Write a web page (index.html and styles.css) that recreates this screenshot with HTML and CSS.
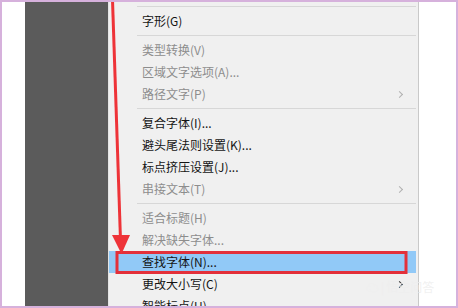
FILE: index.html
```html
<html>
<head>
    <meta charset="utf-8">
    <link rel="stylesheet" href="styles.css">
</head>
<body>
    <div class="frame">
        <div class="side-white"></div>
        <div class="side-dark"></div>
        <div class="menu">
            <div class="sep"></div>
            <div class="item">字形(G)</div>
            <div class="sep"></div>
            <div class="item off">类型转换(V)</div>
            <div class="item off">区域文字选项(A)...</div>
            <div class="item off sub">路径文字(P)</div>
            <div class="sep"></div>
            <div class="item">复合字体(I)...</div>
            <div class="item">避头尾法则设置(K)...</div>
            <div class="item">标点挤压设置(J)...</div>
            <div class="item off sub">串接文本(T)</div>
            <div class="sep"></div>
            <div class="item off">适合标题(H)</div>
            <div class="item off">解决缺失字体...</div>
            <div class="item active">查找字体(N)...</div>
            <div class="item sub">更改大小写(C)</div>
            <div class="item">智能标点(U)...</div>
        </div>
        <div class="side-right"></div>

        <svg class="marks" width="458" height="308" viewBox="0 0 458 308">
            <rect x="117" y="252.5" width="289" height="20" fill="none" stroke="#e3303a" stroke-width="3"/>
            <line x1="112.5" y1="0" x2="120.5" y2="240" stroke="#ee3338" stroke-width="3"/>
            <polygon points="112,235 130,235 121.5,254" fill="#ee3338"/>
        </svg>

        <div class="watermark">
            <span class="wm-icon">&#9729;</span><span class="wm-bar">|</span>悟空问答
        </div>
    </div>
</body>
</html>
```

FILE: styles.css
```css
body{
    margin: 0;
    font-family: "Noto Sans CJK SC", "Noto Sans", sans-serif;
}

.frame{
    position: relative;
    width: 458px;
    height: 308px;
    box-sizing: border-box;
    border: 2px solid #d6b1dc;
    display: flex;
    overflow: hidden;
    background: #fff;
}

.side-white{
    width: 23px;
    background: #fff;
}

.side-dark{
    width: 83px;
    background: #5b5b5b;
}

.menu{
    width: 309px;
    background: #f0f0f0;
    border-left: 1px solid #e4e4e4;
    border-right: 1px solid #c9c9c9;
    padding-top: 1px;
}

.side-right{
    flex: 1;
    background: #fff;
}

.sep{
    height: 7px;
    position: relative;
}

.sep::after{
    content: "";
    position: absolute;
    left: 28px;
    right: 2px;
    top: 3px;
    border-top: 1px solid #d7d7d7;
}

.item{
    position: relative;
    height: 22px;
    line-height: 22px;
    padding-left: 33px;
    margin-right: 2px;
    font-size: 12px;
    color: #141414;
    white-space: nowrap;
}

.item.off{
    color: #8d8d8d;
}

.item.active{
    background: #91c9f7;
}

.item.sub::after{
    content: "";
    position: absolute;
    right: 14px;
    top: 9px;
    width: 4px;
    height: 4px;
    border-top: 1px solid #333;
    border-right: 1px solid #333;
    transform: rotate(45deg);
}

.item.off.sub::after{
    border-color: #b0b0b0;
}

.marks{
    position: absolute;
    left: -2px;
    top: -2px;
}

.watermark{
    position: absolute;
    left: 364px;
    top: 277px;
    font-size: 12px;
    line-height: 16px;
    color: rgba(238, 238, 238, 0.85);
    white-space: nowrap;
}

.wm-icon{
    font-size: 13px;
    margin-right: 2px;
}

.wm-bar{
    margin-right: 2px;
}
```
